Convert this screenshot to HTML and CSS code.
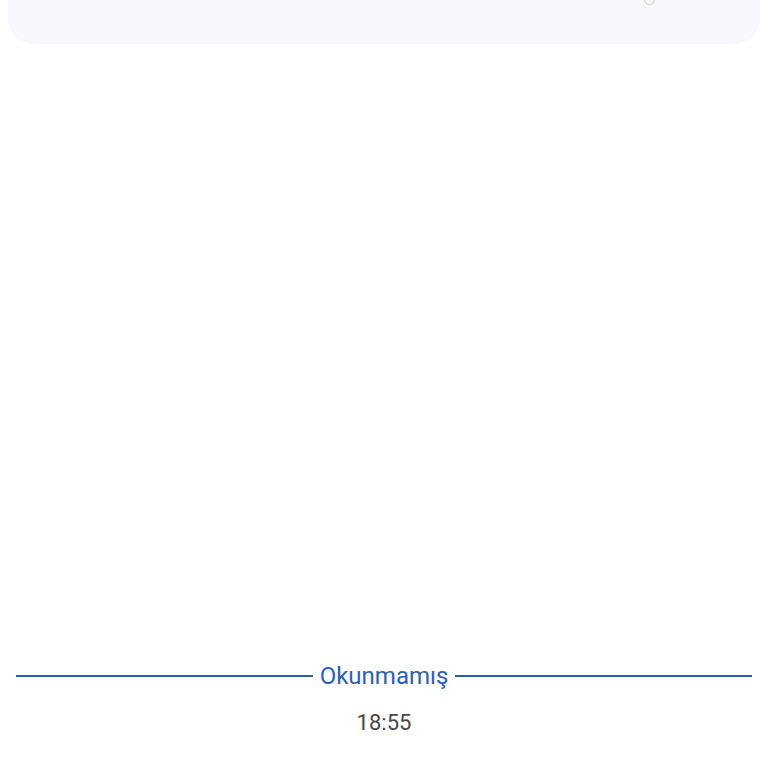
FILE: index.html
```html
<!DOCTYPE html>
<html lang="tr">
<head>
    <meta charset="UTF-8">
    <meta name="viewport" content="width=device-width, initial-scale=1.0">
    <title>Sohbet</title>
    <link rel="stylesheet" href="styles.css">
</head>
<body>

    <div class="top-card">
        <span class="card-icon"></span>
    </div>

    <div class="messages">
        <div class="unread-divider">
            <span class="line"></span>
            <span class="label">Okunmamış</span>
            <span class="line"></span>
        </div>
        <div class="time">18:55</div>
    </div>

</body>
</html>
```

FILE: styles.css
```css
body {
    margin: 0;
    font-family: Roboto, "Noto Sans", Arial, sans-serif;
    background-color: #ffffff;
}
.top-card {
    position: relative;
    height: 44px;
    margin: 0 8px;
    background-color: #f7f8fc;
    border-radius: 0 0 26px 26px;
}
.card-icon {
    position: absolute;
    top: -6px;
    left: 636px;
    width: 9px;
    height: 9px;
    border-radius: 50%;
    border: 1px solid #c9ccd6;
}
.messages {
    display: flex;
    flex-direction: column;
    align-items: center;
    padding-top: 617px;
}
.unread-divider {
    display: flex;
    align-items: center;
    gap: 7px;
    width: 100%;
    box-sizing: border-box;
    padding: 0 16px;
    height: 30px;
}
.unread-divider .line {
    flex: 1;
    height: 2px;
    background-color: #2b5cad;
}
.unread-divider .label {
    color: #2b60ba;
    font-size: 24px;
}
.time {
    margin-top: 19px;
    color: #474747;
    font-size: 22px;
}
```
